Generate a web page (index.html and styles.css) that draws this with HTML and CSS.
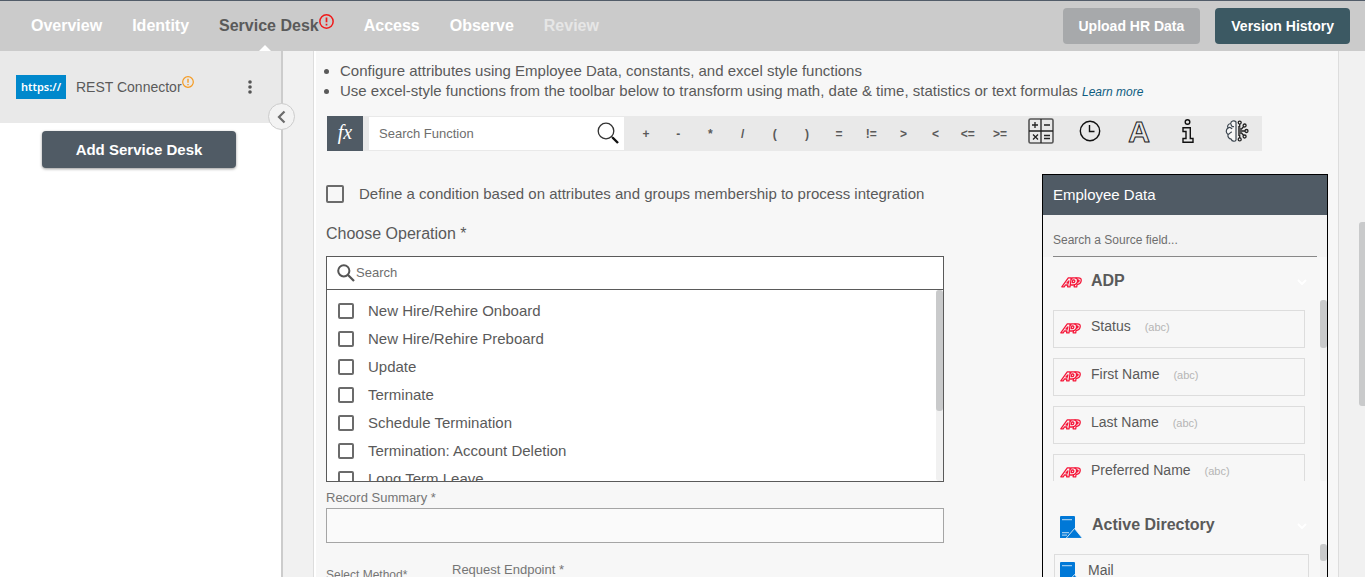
FILE: index.html
```html
<!DOCTYPE html>
<html lang="en">
<head>
<meta charset="utf-8">
<title>Service Desk</title>
<link rel="stylesheet" href="styles.css">
</head>
<body>
<svg class="defs" aria-hidden="true">
  <symbol id="adp" viewBox="0 0 21 11">
    <g fill="none" stroke="#f5183a" stroke-width="1.300" stroke-linejoin="round">
      <path d="M.8 9.800 7.300.8h3L9 9.800H6.600l.3-1.800H4.400L3.200 9.800zM6 6h1.400l.5-2.200z"/>
      <path d="M9.800 2.500 11.500.8h2.200c2.400 0 3.100 1.700 2.700 3.900-.5 2.300-1.900 3.300-4.100 3.300H9.500M11.800 3l-.5 2.700h1c.9 0 1.300-.5 1.500-1.400.1-.8-.2-1.300-1-1.300z"/>
      <path d="M14.300.8h2.900c2.500 0 3.300 1.300 2.900 3.400-.5 2.300-1.900 3.300-4 3.300l-.4 2.300h-2.600l.5-2.600M17 3l-.4 2.200c1 0 1.400-.4 1.500-1.200.1-.7-.2-1-1.100-1"/>
    </g>
  </symbol>
  <symbol id="directory" viewBox="0 0 22 22">
    <path fill="#0078d7" d="M0 1q0-1 1-1h13q1 0 1 1v21H0z"/>
    <path fill="#fff" opacity=".6" d="M2 3h10v1.200H2zM2 16h7v1.200H2zM2 18.500h5v1.200H2z"/>
    <path fill="#0078d7" stroke="#f7f7f7" stroke-width=".8" d="M14.500 12.500 22.500 22.400H6z"/>
  </symbol>
  <symbol id="chevron" viewBox="0 0 10 6"><path d="m1 1 4 4 4-4" fill="none" stroke="#fff" stroke-width="2"/></symbol>
  <symbol id="alert" viewBox="0 0 14 14">
    <circle cx="7" cy="7" r="6.200" fill="none" stroke="currentColor" stroke-width="1.400"/>
    <path d="M7 3.200v4.600M7 9.200v1.500" stroke="currentColor" stroke-width="1.600"/>
  </symbol>
</svg>

<header class="topbar">
  <nav class="tabs">
    <a class="tab" href="#">Overview</a>
    <a class="tab" href="#">Identity</a>
    <a class="tab tab-active" href="#">Service Desk<svg class="tab-alert"><use href="#alert"/></svg></a>
    <a class="tab" href="#">Access</a>
    <a class="tab" href="#">Observe</a>
    <a class="tab tab-disabled" href="#">Review</a>
  </nav>
  <div class="actions">
    <button class="btn btn-muted">Upload HR Data</button>
    <button class="btn btn-teal">Version History</button>
  </div>
</header>

<div class="body">
  <aside class="sidebar">
    <div class="connector">
      <span class="connector-logo">https://</span>
      <span class="connector-name">REST Connector</span>
      <svg class="connector-alert"><use href="#alert"/></svg>
      <button class="kebab" aria-label="Options"><svg width="6" height="14" viewBox="0 0 6 14" fill="#555"><circle cx="3" cy="2" r="1.800"/><circle cx="3" cy="7" r="1.800"/><circle cx="3" cy="12" r="1.800"/></svg></button>
    </div>
    <button class="btn-add">Add Service Desk</button>
    <button class="collapse" aria-label="Collapse"><svg width="10" height="14" viewBox="0 0 10 14"><path d="M7.500 1.500 2 7 7.500 12.500" fill="none" stroke="#6b6b6b" stroke-width="2.200"/></svg></button>
  </aside>

  <main class="main">
    <div class="panel">
      <ul class="hints">
        <li>Configure attributes using Employee Data, constants, and excel style functions</li>
        <li>Use excel-style functions from the toolbar below to transform using math, date &amp; time, statistics or text formulas <a class="learn" href="#">Learn more</a></li>
      </ul>

      <div class="toolbar">
        <span class="fx">fx</span>
        <label class="fn-search">
          <input type="text" placeholder="Search Function" aria-label="Search Function">
          <svg width="22" height="22" viewBox="0 0 22 22" fill="none" stroke="#333"><circle cx="9" cy="9" r="7.800" stroke-width="1.300"/><path d="m14.500 14.500 1.500 1.500" stroke-width="1.300"/><path d="m15.500 15.500 5.500 5.500" stroke="#111" stroke-width="2.400"/></svg>
        </label>
        <div class="ops">
          <button>+</button><button>-</button><button>*</button><button>/</button><button>(</button><button>)</button><button>=</button><button>!=</button><button>&gt;</button><button>&lt;</button><button>&lt;=</button><button>&gt;=</button>
        </div>
        <div class="fn-groups">
          <button aria-label="Math"><svg width="26" height="26" viewBox="0 0 26 26" fill="none" stroke="#222"><rect x="1" y="1" width="24" height="24" rx="1.500" stroke="#555" stroke-width="1.600"/><path d="M13 1v24M1 13h24" stroke-width="1.300"/><path d="M4 7h6M7 4v6M16 7h6M5 16.500l5 5M10 16.500l-5 5M16 17.500h6M16 20.500h6" stroke-width="1.300"/></svg></button>
          <button aria-label="Date and time"><svg width="22" height="22" viewBox="0 0 22 22" fill="none" stroke="#111" stroke-width="1.400"><circle cx="11" cy="11" r="9.700"/><path d="M10.500 5v6.500h5"/></svg></button>
          <button aria-label="Text"><svg width="28" height="30" viewBox="0 0 28 30"><text class="glyph-a" x="14" y="26" text-anchor="middle">A</text></svg></button>
          <button aria-label="Information"><svg width="14" height="26" viewBox="0 0 14 26" fill="none" stroke="#111" stroke-width="1.400"><circle cx="6.500" cy="4" r="2.300"/><path d="M2 9.700h7.300v10.800H12v3.800H2v-3.800h3v-7H2z"/></svg></button>
          <button aria-label="Intelligence"><svg width="24" height="24" viewBox="0 0 24 24"><g fill="none" stroke="#3c4650" stroke-width="1.200"><path fill="#f7f7f7" d="M11 3C9 .8 6 2 5.700 4.500 3 5 2 7 3 9c-2.300 1.500-2.300 5 0 6.500C2.500 18 4 20 6.200 20.200 7 22.500 10 23 11 21z"/><path d="M6 5c0 2 1.500 3 3 2.500M3 9c1.500-1 3.500-.5 4 1M7 13c-1.500 0-2 1.500-4 2.500"/></g><g fill="none" stroke="#222" stroke-width="1.300"><path d="M13 8h1.700V5M13 10h3.500l2-2.300M13 12h7M13 14h3.500l2 2.300M13 16h1.700v3"/><circle cx="14.700" cy="3.600" r="1.500"/><circle cx="19.600" cy="6.500" r="1.500"/><circle cx="21.500" cy="12" r="1.500"/><circle cx="19.600" cy="17.500" r="1.500"/><circle cx="14.700" cy="20.400" r="1.500"/></g></svg></button>
        </div>
      </div>

      <div class="columns">
        <form class="form">
          <label class="condition"><input type="checkbox" class="check check-lg">Define a condition based on attributes and groups membership to process integration</label>
          <h2 class="form-title">Choose Operation *</h2>
          <div class="picker">
            <label class="picker-search">
              <svg width="18" height="18" viewBox="0 0 18 18" fill="none" stroke="#555"><circle cx="6.800" cy="6.800" r="5.600" stroke-width="2"/><path d="m11 11 6 6" stroke-width="2.300"/></svg>
              <input type="text" placeholder="Search" aria-label="Search">
            </label>
            <div class="picker-list">
              <label><input type="checkbox" class="check">New Hire/Rehire Onboard</label>
              <label><input type="checkbox" class="check">New Hire/Rehire Preboard</label>
              <label><input type="checkbox" class="check">Update</label>
              <label><input type="checkbox" class="check">Terminate</label>
              <label><input type="checkbox" class="check">Schedule Termination</label>
              <label><input type="checkbox" class="check">Termination: Account Deletion</label>
              <label><input type="checkbox" class="check">Long Term Leave</label>
            </div>
          </div>
          <label class="field-label" for="summary">Record Summary *</label>
          <input class="field" id="summary" type="text">
          <div class="request">
            <span class="method-label">Select Method*</span>
            <span class="endpoint-label">Request Endpoint *</span>
          </div>
        </form>

        <section class="source">
          <h2 class="source-title">Employee Data</h2>
          <div class="source-search"><input type="text" placeholder="Search a Source field..." aria-label="Search a Source field"></div>
          <h3 class="group"><svg class="adp"><use href="#adp"/></svg>ADP<svg class="chevron"><use href="#chevron"/></svg></h3>
          <div class="attrs">
            <div class="attr"><svg class="adp"><use href="#adp"/></svg>Status<small>(abc)</small></div>
            <div class="attr"><svg class="adp"><use href="#adp"/></svg>First Name<small>(abc)</small></div>
            <div class="attr"><svg class="adp"><use href="#adp"/></svg>Last Name<small>(abc)</small></div>
            <div class="attr"><svg class="adp"><use href="#adp"/></svg>Preferred Name<small>(abc)</small></div>
          </div>
          <h3 class="group group-ad"><svg class="dir"><use href="#directory"/></svg>Active Directory<svg class="chevron"><use href="#chevron"/></svg></h3>
          <div class="attrs attrs-ad">
            <div class="attr attr-ad"><svg class="dir"><use href="#directory"/></svg>Mail</div>
          </div>
        </section>
      </div>
    </div>
  </main>
</div>
</body>
</html>
```

FILE: styles.css
```css
* { box-sizing: border-box; }

body {
  margin: 0;
  height: 100vh;
  overflow: hidden;
  display: flex;
  flex-direction: column;
  background: #fff;
  color: #5a5a5a;
  font: 15px/20px "Liberation Sans", Arial, sans-serif;
}

button, input { font: inherit; color: inherit; }
button { border: 0; padding: 0; background: none; cursor: pointer; }
svg { flex: none; }
.defs { position: absolute; width: 0; height: 0; }

/* Top bar */
.topbar {
  flex: none;
  height: 51px;
  display: flex;
  justify-content: space-between;
  align-items: center;
  padding: 0 15px 0 31px;
  border-top: 1px solid #525c69;
  background: #cbcbcb;
}
.tabs { display: flex; gap: 30px; height: 100%; }
.tab {
  position: relative;
  display: flex;
  align-items: center;
  color: #fff;
  font-size: 16px;
  font-weight: bold;
  text-decoration: none;
}
.tab-active { color: #5a5a5a; }
.tab-active::after {
  content: "";
  position: absolute;
  bottom: -1px;
  left: 39px;
  border: 7px solid transparent;
  border-top: 0;
  border-bottom-color: #fff;
}
.tab-alert { width: 15px; height: 15px; margin-bottom: 10px; color: #f01a1a; }
.tab-disabled { color: #e6e6e6; }
.actions { display: flex; gap: 15px; }
.btn {
  height: 36px;
  padding: 0 16px;
  border-radius: 4px;
  color: #fff;
  font-size: 14px;
  font-weight: bold;
}
.btn-muted { background: #a7a9ab; }
.btn-teal { background: #3c5963; }

.body { flex: 1; min-height: 0; display: flex; }

/* Sidebar */
.sidebar {
  position: relative;
  flex: none;
  width: 283px;
  border-right: 2px solid #ccc;
  background: #fff;
}
.connector {
  display: flex;
  align-items: center;
  height: 72px;
  padding: 0 26px 0 16px;
  background: #e9e9e9;
}
.connector-logo {
  width: 50px;
  margin-right: 10px;
  background: #0088cc;
  color: #fff;
  font: 600 11px/24px "Noto Sans", sans-serif;
  text-align: center;
}
.connector-name { font-size: 14px; }
.connector-alert { width: 12px; height: 12px; margin-bottom: 10px; color: #f59b23; }
.kebab { width: 10px; height: 20px; margin-left: auto; display: flex; align-items: center; justify-content: center; }
.btn-add {
  display: block;
  width: 194px;
  height: 37px;
  margin: 8px auto 0 42px;
  border-radius: 4px;
  background: #505b65;
  box-shadow: 0 1px 3px rgba(0, 0, 0, .4);
  color: #fff;
  font-weight: bold;
}
.collapse {
  position: absolute;
  z-index: 1;
  top: 52px;
  right: -14px;
  width: 27px;
  height: 27px;
  border: 1px solid #ccc;
  border-radius: 50%;
  background: #f3f3f3;
  display: flex;
  align-items: center;
  justify-content: center;
}

/* Main */
.main {
  position: relative;
  flex: 1;
  min-width: 0;
  padding: 0 26px 0 30px;
  background: #f1f1f1;
}
.main::after {
  content: "";
  position: absolute;
  top: 171px;
  right: 0;
  width: 6px;
  height: 184px;
  border-radius: 3px 0 0 3px;
  background: #c9cacb;
}
.panel {
  height: 100%;
  overflow: hidden;
  padding: 10px 10px 0 13px;
  border: 1px solid #ddd;
  border-width: 0 1px;
  background: #f7f7f7;
  box-shadow: inset 2px 0 #fff;
}
.hints { margin: 0; padding-left: 13px; }
.learn { color: #0d5c80; font-size: 12px; font-style: italic; text-decoration: none; }

.toolbar {
  display: flex;
  max-width: 935px;
  height: 35px;
  margin-top: 14px;
  background: #e9e9e9;
}
.fx {
  width: 36px;
  background: #505b65;
  color: #fff;
  font: italic 20px/32px "Liberation Serif", serif;
  text-align: center;
}
.fn-search {
  display: flex;
  align-items: center;
  width: 255px;
  margin: 1px 6px;
  padding: 0 5px 0 10px;
  background: #fff;
}
.fn-search svg { margin-bottom: 2px; }
input { min-width: 0; outline: 0; }
input[type="text"] { flex: 1; padding: 0; border: 0; background: none; }
input::placeholder { color: #6e6e6e; opacity: 1; }
.fn-search input { font-size: 13px; }
.ops { flex: 386; display: grid; grid-template-columns: repeat(12, 1fr); }
.ops button { font-size: 12px; font-weight: bold; }
.fn-groups { flex: 246; display: grid; grid-template-columns: repeat(5, 1fr); }
.fn-groups button { display: flex; align-items: center; justify-content: center; padding-bottom: 6px; }
.glyph-a { fill: none; stroke: #222; stroke-width: 1; font: bold 30px "Liberation Sans", sans-serif; }

.columns { display: flex; justify-content: space-between; align-items: flex-start; gap: 30px; margin-top: 23px; }

/* Form */
.form { flex: 0 1 618px; margin-left: -1px; padding-top: 10px; }
.condition { display: flex; align-items: center; }
.check {
  appearance: none;
  flex: none;
  width: 16px;
  height: 16px;
  margin: 0 14px 0 0;
  border: 2px solid #6b6b6b;
  border-radius: 2px;
}
.check-lg { width: 18px; height: 18px; margin-right: 15px; }
.form-title { margin: 20px 0 12px; font-size: 16px; font-weight: normal; }
.picker { height: 226px; border: 1px solid #5a5a5a; background: #fff; }
.picker-search {
  display: flex;
  align-items: center;
  height: 33px;
  padding-left: 10px;
  border-bottom: 1px solid #5a5a5a;
}
.picker-search input { margin-left: 1px; font-size: 13px; }
.picker-list { position: relative; height: 191px; overflow: hidden; padding: 7px 0 0 11px; }
.picker-list label { display: flex; align-items: center; height: 28px; }
.picker-list::before, .picker-list::after {
  content: "";
  position: absolute;
  top: 0;
  right: 0;
  width: 7px;
  height: 100%;
  border-radius: 3px;
  background: #f1f1f1;
}
.picker-list::after { height: 121px; background: #c9cacb; }
.field-label { display: block; margin: 6px 0 0; font-size: 13px; color: #757575; }
.form .field { display: block; width: 100%; height: 35px; border: 1px solid #a5a5a5; background: #fafafa; padding: 0 8px; }
.request { display: flex; align-items: flex-start; margin-top: 17px; color: #757575; }
.method-label { width: 126px; padding-top: 5px; font-size: 12px; }
.endpoint-label { font-size: 13px; }

/* Source panel */
.source { flex: none; width: 286px; height: 480px; border: 1px solid #000; }
.source-title {
  margin: 0;
  padding-left: 10px;
  background: #505b65;
  color: #fff;
  font-size: 15px;
  font-weight: normal;
  line-height: 40px;
}
.source-search { padding: 0 10px; background: #f3f3f3; }
.source-search input { display: block; width: 100%; height: 42px; padding-top: 8px; border-bottom: 1px solid #888; font-size: 12px; }
.group { display: flex; align-items: center; height: 43px; margin: 0; padding: 4px 20px 0 18px; font-size: 16px; }
.adp { width: 21px; height: 11px; margin: 3px 9px 0 0; }
.dir { width: 22px; height: 22px; margin: 3px 10px 0 0; }
.chevron { width: 10px; height: 6px; margin: 2px 0 0 auto; }
.attrs {
  position: relative;
  height: 181px;
  overflow: hidden;
  display: flex;
  flex-direction: column;
  gap: 10px;
  padding: 10px 22px 0 10px;
}
.attrs::before, .attrs::after {
  content: "";
  position: absolute;
  top: 0;
  right: 0;
  width: 7px;
  height: 100%;
  border-radius: 3px;
  background: #f1f1f1;
}
.attrs::after { height: 48px; background: #c9cacb; }
.attr { flex: none; display: flex; align-items: center; height: 38px; padding: 0 6px 6px; border: 1px solid #ddd; font-size: 14px; }
.attr .adp { margin-top: 4px; margin-right: 10px; }
.attr small { margin: 2px 0 0 14px; color: #b5b5b5; font-size: 11px; }
.group-ad { height: 63px; padding: 25px 20px 0 17px; }
.attrs-ad { padding: 10px 18px 0 11px; }
.attrs-ad::after { height: 17px; }
.attr-ad { padding: 0 5px 6px; }
.attr-ad .dir { margin: 6px 6px 0 0; }
```
